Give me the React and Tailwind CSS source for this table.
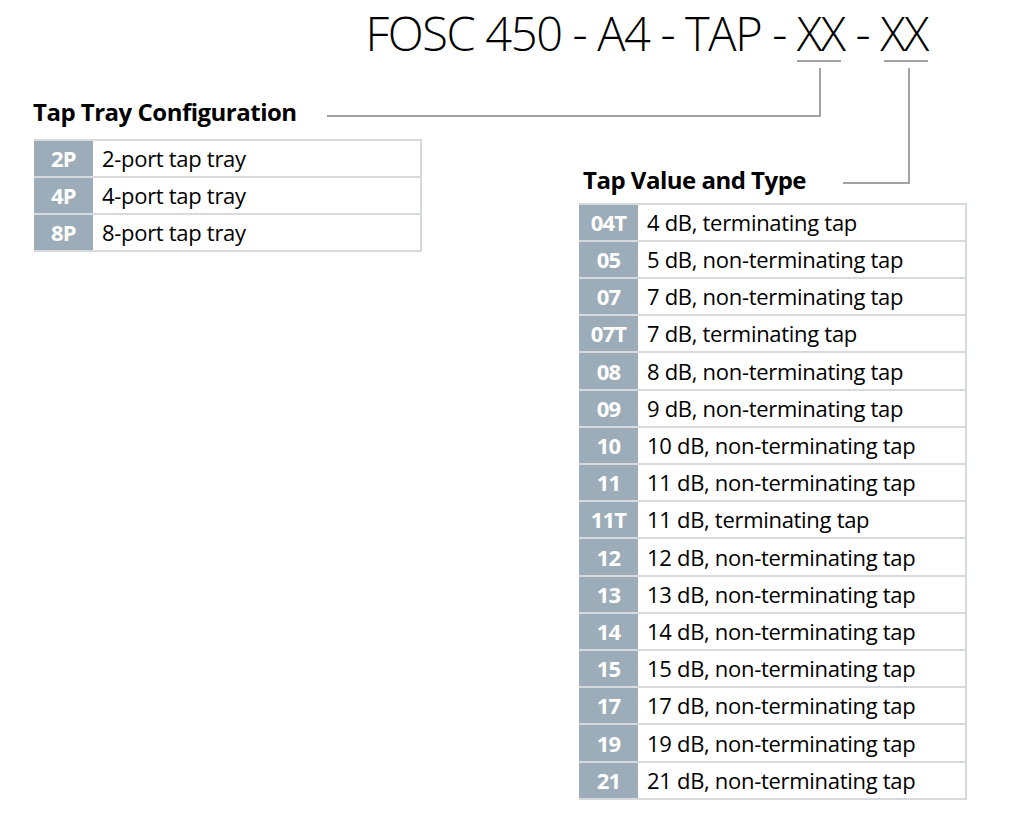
import React from "react";

const trayRows = [
    ["2P", "2-port tap tray"],
    ["4P", "4-port tap tray"],
    ["8P", "8-port tap tray"],
];

const tapRows = [
    ["04T", "4 dB, terminating tap"],
    ["05", "5 dB, non-terminating tap"],
    ["07", "7 dB, non-terminating tap"],
    ["07T", "7 dB, terminating tap"],
    ["08", "8 dB, non-terminating tap"],
    ["09", "9 dB, non-terminating tap"],
    ["10", "10 dB, non-terminating tap"],
    ["11", "11 dB, non-terminating tap"],
    ["11T", "11 dB, terminating tap"],
    ["12", "12 dB, non-terminating tap"],
    ["13", "13 dB, non-terminating tap"],
    ["14", "14 dB, non-terminating tap"],
    ["15", "15 dB, non-terminating tap"],
    ["17", "17 dB, non-terminating tap"],
    ["19", "19 dB, non-terminating tap"],
    ["21", "21 dB, non-terminating tap"],
];

const CodeTable = ({ rows, width }) => (
    <div className={`${width} border-t-2 border-[#d6dadd]`}>
        {rows.map(([code, label], i) => (
            <div key={code} className={`flex ${i % 5 === 4 ? "h-[38px]" : "h-[37px]"} border-b-2 border-[#d6dadd]`}>
                <div className="w-[59px] shrink-0 bg-[#9cadb9] flex items-center justify-center text-white font-bold text-[22px] tracking-[-0.8px]">
                    {code}
                </div>
                <div className="flex-1 flex items-center pl-[9px] text-[22px] tracking-[-0.3px] text-black border-r-2 border-[#d6dadd]">
                    {label}
                </div>
            </div>
        ))}
    </div>
);

const App = () => {
    return (
        <div className="relative w-[1014px] h-[818px] bg-white overflow-hidden" style={{ fontFamily: "'Open Sans', sans-serif" }}>
            {/* Part number */}
            <div className="flex justify-end pr-[86px] pt-[4px]">
                <h1 className="text-[47px] leading-[58px] font-light text-black tracking-[-1.35px]">
                    FOSC 450 - A4 - TAP - XX - XX
                </h1>
            </div>

            <div className="flex items-start mt-[34px]">
                {/* Tap Tray Configuration */}
                <div className="ml-[33px]">
                    <h2 className="text-[24px] leading-[32px] font-bold text-black tracking-[-0.5px] mb-[11px]">Tap Tray Configuration</h2>
                    <div className="ml-[1px]">
                        <CodeTable rows={trayRows} width="w-[388px]" />
                    </div>
                </div>

                {/* Tap Value and Type */}
                <div className="ml-[157px] mt-[68px]">
                    <h2 className="text-[24px] leading-[32px] font-bold text-black tracking-[-0.5px] ml-[4px] mb-[7px]">Tap Value and Type</h2>
                    <CodeTable rows={tapRows} width="w-[388px]" />
                </div>
            </div>

            {/* connector lines */}
            <svg className="absolute inset-0 pointer-events-none" width="1014" height="818">
                <g stroke="#a3a3a3" strokeWidth="2" fill="none">
                    <line x1="797" y1="61" x2="841" y2="61" />
                    <line x1="884" y1="61" x2="928" y2="61" />
                    <polyline points="820,68 820,116 327,116" />
                    <polyline points="909,68 909,183 843,183" />
                </g>
            </svg>
        </div>
    );
};

export default App;
